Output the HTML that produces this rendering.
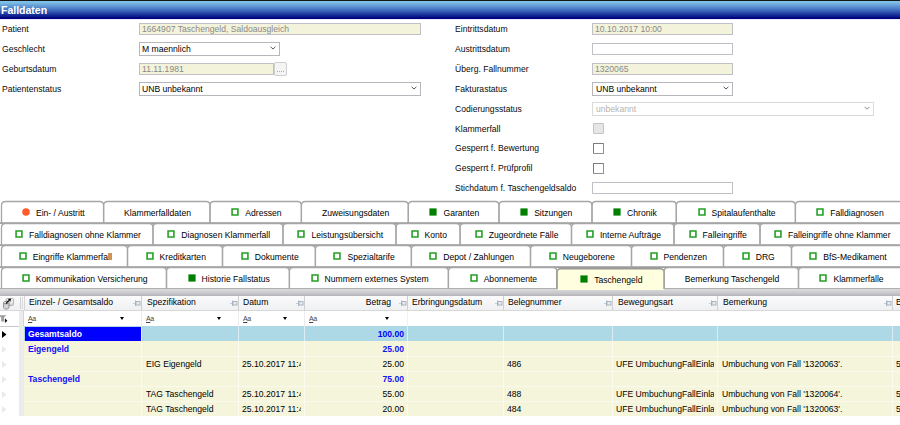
<!DOCTYPE html>
<html><head><meta charset="utf-8"><style>
html,body{margin:0;padding:0}
body{width:900px;height:425px;overflow:hidden;background:#fff;font-family:"Liberation Sans",sans-serif;font-size:8.6px;color:#000;position:relative}
.a{position:absolute;white-space:nowrap}
#hdr{left:0;top:0;width:900px;height:19px;background:linear-gradient(to bottom,#161616 0,#161616 1px,#80c8ea 1px,#7ab8e2 3px,#5a90d0 7px,#3a62b8 11px,#1e3aa0 14px,#0c1a8c 16.5px,#000080 18px,#000080 19px)}
#hdr span{position:absolute;left:1px;top:4px;color:#fff;font-weight:bold;font-size:10.5px}
.lbl{position:absolute;white-space:nowrap;color:#0a0a0a}
.inp{position:absolute;box-sizing:border-box;border:1px solid #c0c0c6;background:#fff}
.ro{background:#f3f3dc;color:#8a8a8a}
.sel{position:absolute;box-sizing:border-box;border:1px solid #b6b6bc;background:#fff}
.cb{position:absolute;box-sizing:border-box;width:10.5px;height:11px;border:1px solid #7c7c7c;border-right-color:#909090;border-bottom-color:#909090;background:#fff;border-radius:1px}
.tab{position:absolute;box-sizing:border-box;height:22px;display:flex;align-items:center;justify-content:center;color:#000;white-space:nowrap;padding-top:1px;padding-left:1.5px}
.ic{display:inline-block;box-sizing:border-box;width:8px;height:8px;margin-right:6px;flex:none;position:relative;top:-0.5px}
.ho{box-shadow:inset 0 0 0 1.7px #22a022;transform:scale(0.93)}
.so{background:#008000;transform:scale(0.9)}
.dot{border-radius:50%;background:#ff5b2b;transform:scale(0.95)}
.gh{color:#000}
.aa{position:absolute;top:315px;font-style:normal;font-size:7px;color:#444;letter-spacing:-0.4px}
.aa u{text-decoration:underline}
.tri{position:absolute;top:317px;width:0;height:0;border-left:2.5px solid transparent;border-right:2.5px solid transparent;border-top:3px solid #000}
.c{color:#000}
.b{font-weight:bold}
.clip{overflow:hidden}
</style></head><body>
<div id="hdr" class="a"><span>Falldaten</span></div>
<div class="a" style="left:0;top:19px;width:900px;height:1px;background:#ececf6"></div>

<!-- left labels -->
<div class="lbl" style="left:2px;top:24px">Patient</div>
<div class="lbl" style="left:2px;top:44px">Geschlecht</div>
<div class="lbl" style="left:2px;top:64px">Geburtsdatum</div>
<div class="lbl" style="left:2px;top:84px">Patientenstatus</div>

<div class="inp ro" style="left:139px;top:23px;width:282px;height:12px"></div>
<div class="a" style="left:142px;top:24px;color:#8a8a8a">1664907 Taschengeld, Saldoausgleich</div>
<div class="sel" style="left:139px;top:42px;width:141px;height:14px"></div>
<div class="a" style="left:142px;top:44px">M maennlich</div>
<svg class="a" style="left:270px;top:46px" width="6" height="4" viewBox="0 0 6 4"><path d="M0.6 0.8L3 3L5.4 0.8" stroke="#5a5a5a" stroke-width="1" fill="none"/></svg>
<div class="inp ro" style="left:139px;top:63px;width:135px;height:12px"></div>
<div class="a" style="left:142px;top:64px;color:#8a8a8a">11.11.1981</div>
<div class="inp" style="left:274px;top:62px;width:13px;height:14px;background:#f4f4f4;border-color:#cfcfcf;border-radius:2px"></div>
<svg class="a" style="left:277px;top:71px" width="8" height="2"><rect x="0" y="0" width="1" height="1" fill="#b0a0a8"/><rect x="2" y="0" width="1" height="1" fill="#a8b0b8"/><rect x="4" y="0" width="1" height="1" fill="#a8b0b8"/><rect x="6" y="0" width="1" height="1" fill="#b0a8c0"/></svg>
<div class="sel" style="left:139px;top:82px;width:282px;height:14px"></div>
<div class="a" style="left:142px;top:84px">UNB unbekannt</div>
<svg class="a" style="left:411px;top:86px" width="6" height="4" viewBox="0 0 6 4"><path d="M0.6 0.8L3 3L5.4 0.8" stroke="#5a5a5a" stroke-width="1" fill="none"/></svg>

<!-- right labels -->
<div class="lbl" style="left:455px;top:24px">Eintrittsdatum</div>
<div class="lbl" style="left:455px;top:44px">Austrittsdatum</div>
<div class="lbl" style="left:455px;top:64px">Überg. Fallnummer</div>
<div class="lbl" style="left:455px;top:84px">Fakturastatus</div>
<div class="lbl" style="left:455px;top:104px">Codierungsstatus</div>
<div class="lbl" style="left:455px;top:124px">Klammerfall</div>
<div class="lbl" style="left:455px;top:143px">Gesperrt f. Bewertung</div>
<div class="lbl" style="left:455px;top:163px">Gesperrt f. Prüfprofil</div>
<div class="lbl" style="left:455px;top:183px">Stichdatum f. Taschengeldsaldo</div>

<div class="inp ro" style="left:592px;top:23px;width:141px;height:12px"></div>
<div class="a" style="left:595px;top:24px;color:#8a8a8a">10.10.2017 10:00</div>
<div class="inp" style="left:592px;top:43px;width:141px;height:12px"></div>
<div class="inp ro" style="left:592px;top:63px;width:141px;height:12px"></div>
<div class="a" style="left:595px;top:64px;color:#8a8a8a">1320065</div>
<div class="sel" style="left:592px;top:82px;width:141px;height:14px"></div>
<div class="a" style="left:596px;top:84px">UNB unbekannt</div>
<svg class="a" style="left:723px;top:86px" width="6" height="4" viewBox="0 0 6 4"><path d="M0.6 0.8L3 3L5.4 0.8" stroke="#5a5a5a" stroke-width="1" fill="none"/></svg>
<div class="sel" style="left:592px;top:102px;width:282px;height:14px;border-color:#dadada"></div>
<div class="a" style="left:596px;top:104px;color:#b4b4b4">unbekannt</div>
<svg class="a" style="left:864px;top:106px" width="6" height="4" viewBox="0 0 6 4"><path d="M0.6 0.8L3 3L5.4 0.8" stroke="#b0b0b0" stroke-width="1.1" fill="none"/></svg>
<div class="cb" style="left:593px;top:123px;background:#e6e6e6;border-color:#c4c4c4"></div>
<div class="cb" style="left:593px;top:143px"></div>
<div class="cb" style="left:593px;top:163px"></div>
<div class="inp" style="left:592px;top:182px;width:141px;height:12px"></div>

<!-- tabs -->
<svg class="a" style="left:0;top:0" width="900" height="300" viewBox="0 0 900 300">
<path d="M556.90 290.00V272.80Q556.90 268.80 560.90 268.80H660.20Q664.20 268.80 664.20 272.80V290.00Z" fill="#ffffe0"/>
<rect x="0" y="222" width="900" height="1" fill="#b4b4b4"/><rect x="0" y="223" width="900" height="1" fill="#9c9c9c"/>
<rect x="0" y="244" width="900" height="1" fill="#b4b4b4"/><rect x="0" y="245" width="900" height="1" fill="#9c9c9c"/>
<rect x="0" y="266" width="900" height="1" fill="#b4b4b4"/><rect x="0" y="267" width="900" height="1" fill="#9c9c9c"/>
<rect x="0" y="288" width="556" height="1" fill="#b0b0b0"/><rect x="665" y="288" width="235" height="1" fill="#b0b0b0"/>
<path d="M1.50 224.00V205.50Q1.50 201.50 5.50 201.50H99.60Q103.60 201.50 103.60 205.50V224.00" fill="none" stroke="#a6a6a6" stroke-width="1.3"/>
<path d="M103.60 224.00V205.50Q103.60 201.50 107.60 201.50H206.00Q210.00 201.50 210.00 205.50V224.00" fill="none" stroke="#a6a6a6" stroke-width="1.3"/>
<path d="M210.00 224.00V205.50Q210.00 201.50 214.00 201.50H297.40Q301.40 201.50 301.40 205.50V224.00" fill="none" stroke="#a6a6a6" stroke-width="1.3"/>
<path d="M301.40 224.00V205.50Q301.40 201.50 305.40 201.50H404.30Q408.30 201.50 408.30 205.50V224.00" fill="none" stroke="#a6a6a6" stroke-width="1.3"/>
<path d="M408.30 224.00V205.50Q408.30 201.50 412.30 201.50H495.00Q499.00 201.50 499.00 205.50V224.00" fill="none" stroke="#a6a6a6" stroke-width="1.3"/>
<path d="M499.00 224.00V205.50Q499.00 201.50 503.00 201.50H588.00Q592.00 201.50 592.00 205.50V224.00" fill="none" stroke="#a6a6a6" stroke-width="1.3"/>
<path d="M592.00 224.00V205.50Q592.00 201.50 596.00 201.50H672.30Q676.30 201.50 676.30 205.50V224.00" fill="none" stroke="#a6a6a6" stroke-width="1.3"/>
<path d="M676.30 224.00V205.50Q676.30 201.50 680.30 201.50H791.40Q795.40 201.50 795.40 205.50V224.00" fill="none" stroke="#a6a6a6" stroke-width="1.3"/>
<path d="M795.40 224.00V205.50Q795.40 201.50 799.40 201.50H899.00Q903.00 201.50 903.00 205.50V224.00" fill="none" stroke="#a6a6a6" stroke-width="1.3"/>
<path d="M1.50 246.00V227.50Q1.50 223.50 5.50 223.50H149.00Q153.00 223.50 153.00 227.50V246.00" fill="none" stroke="#a6a6a6" stroke-width="1.3"/>
<path d="M153.00 246.00V227.50Q153.00 223.50 157.00 223.50H279.00Q283.00 223.50 283.00 227.50V246.00" fill="none" stroke="#a6a6a6" stroke-width="1.3"/>
<path d="M283.00 246.00V227.50Q283.00 223.50 287.00 223.50H392.00Q396.00 223.50 396.00 227.50V246.00" fill="none" stroke="#a6a6a6" stroke-width="1.3"/>
<path d="M396.00 246.00V227.50Q396.00 223.50 400.00 223.50H456.10Q460.10 223.50 460.10 227.50V246.00" fill="none" stroke="#a6a6a6" stroke-width="1.3"/>
<path d="M460.10 246.00V227.50Q460.10 223.50 464.10 223.50H567.50Q571.50 223.50 571.50 227.50V246.00" fill="none" stroke="#a6a6a6" stroke-width="1.3"/>
<path d="M571.50 246.00V227.50Q571.50 223.50 575.50 223.50H670.00Q674.00 223.50 674.00 227.50V246.00" fill="none" stroke="#a6a6a6" stroke-width="1.3"/>
<path d="M674.00 246.00V227.50Q674.00 223.50 678.00 223.50H756.00Q760.00 223.50 760.00 227.50V246.00" fill="none" stroke="#a6a6a6" stroke-width="1.3"/>
<path d="M760.00 246.00V227.50Q760.00 223.50 764.00 223.50H899.00Q903.00 223.50 903.00 227.50V246.00" fill="none" stroke="#a6a6a6" stroke-width="1.3"/>
<path d="M1.50 268.00V249.50Q1.50 245.50 5.50 245.50H123.50Q127.50 245.50 127.50 249.50V268.00" fill="none" stroke="#a6a6a6" stroke-width="1.3"/>
<path d="M127.50 268.00V249.50Q127.50 245.50 131.50 245.50H218.50Q222.50 245.50 222.50 249.50V268.00" fill="none" stroke="#a6a6a6" stroke-width="1.3"/>
<path d="M222.50 268.00V249.50Q222.50 245.50 226.50 245.50H311.40Q315.40 245.50 315.40 249.50V268.00" fill="none" stroke="#a6a6a6" stroke-width="1.3"/>
<path d="M315.40 268.00V249.50Q315.40 245.50 319.40 245.50H407.40Q411.40 245.50 411.40 249.50V268.00" fill="none" stroke="#a6a6a6" stroke-width="1.3"/>
<path d="M411.40 268.00V249.50Q411.40 245.50 415.40 245.50H526.50Q530.50 245.50 530.50 249.50V268.00" fill="none" stroke="#a6a6a6" stroke-width="1.3"/>
<path d="M530.50 268.00V249.50Q530.50 245.50 534.50 245.50H627.50Q631.50 245.50 631.50 249.50V268.00" fill="none" stroke="#a6a6a6" stroke-width="1.3"/>
<path d="M631.50 268.00V249.50Q631.50 245.50 635.50 245.50H719.50Q723.50 245.50 723.50 249.50V268.00" fill="none" stroke="#a6a6a6" stroke-width="1.3"/>
<path d="M723.50 268.00V249.50Q723.50 245.50 727.50 245.50H787.50Q791.50 245.50 791.50 249.50V268.00" fill="none" stroke="#a6a6a6" stroke-width="1.3"/>
<path d="M791.50 268.00V249.50Q791.50 245.50 795.50 245.50H899.00Q903.00 245.50 903.00 249.50V268.00" fill="none" stroke="#a6a6a6" stroke-width="1.3"/>
<path d="M1.50 289.50V271.50Q1.50 267.50 5.50 267.50H162.50Q166.50 267.50 166.50 271.50V289.50" fill="none" stroke="#a6a6a6" stroke-width="1.3"/>
<path d="M166.50 289.50V271.50Q166.50 267.50 170.50 267.50H285.40Q289.40 267.50 289.40 271.50V289.50" fill="none" stroke="#a6a6a6" stroke-width="1.3"/>
<path d="M289.40 289.50V271.50Q289.40 267.50 293.40 267.50H444.40Q448.40 267.50 448.40 271.50V289.50" fill="none" stroke="#a6a6a6" stroke-width="1.3"/>
<path d="M448.40 289.50V271.50Q448.40 267.50 452.40 267.50H552.90Q556.90 267.50 556.90 271.50V289.50" fill="none" stroke="#a6a6a6" stroke-width="1.3"/>
<path d="M556.90 290.00V272.80Q556.90 268.80 560.90 268.80H660.20Q664.20 268.80 664.20 272.80V290.00" fill="none" stroke="#9a9a9a" stroke-width="1.5"/>
<path d="M664.20 289.50V271.50Q664.20 267.50 668.20 267.50H794.50Q798.50 267.50 798.50 271.50V289.50" fill="none" stroke="#a6a6a6" stroke-width="1.3"/>
<path d="M798.50 289.50V271.50Q798.50 267.50 802.50 267.50H899.00Q903.00 267.50 903.00 271.50V289.50" fill="none" stroke="#a6a6a6" stroke-width="1.3"/>
</svg>
<div class="tab" style="left:1.5px;top:201px;width:102.1px"><i class="ic dot"></i>Ein- / Austritt</div>
<div class="tab" style="left:103.6px;top:201px;width:106.4px">Klammerfalldaten</div>
<div class="tab" style="left:210.0px;top:201px;width:91.4px"><i class="ic ho"></i>Adressen</div>
<div class="tab" style="left:301.4px;top:201px;width:106.9px">Zuweisungsdaten</div>
<div class="tab" style="left:408.3px;top:201px;width:90.7px"><i class="ic so"></i>Garanten</div>
<div class="tab" style="left:499.0px;top:201px;width:93.0px"><i class="ic so"></i>Sitzungen</div>
<div class="tab" style="left:592.0px;top:201px;width:84.3px"><i class="ic so"></i>Chronik</div>
<div class="tab" style="left:676.3px;top:201px;width:119.1px"><i class="ic ho"></i>Spitalaufenthalte</div>
<div class="tab" style="left:795.4px;top:201px;width:107.6px"><i class="ic ho"></i>Falldiagnosen</div>
<div class="tab" style="left:1.5px;top:223px;width:151.5px"><i class="ic ho"></i>Falldiagnosen ohne Klammer</div>
<div class="tab" style="left:153.0px;top:223px;width:130.0px"><i class="ic ho"></i>Diagnosen Klammerfall</div>
<div class="tab" style="left:283.0px;top:223px;width:113.0px"><i class="ic ho"></i>Leistungsübersicht</div>
<div class="tab" style="left:396.0px;top:223px;width:64.1px"><i class="ic ho"></i>Konto</div>
<div class="tab" style="left:460.1px;top:223px;width:111.4px"><i class="ic ho"></i>Zugeordnete Fälle</div>
<div class="tab" style="left:571.5px;top:223px;width:102.5px"><i class="ic ho"></i>Interne Aufträge</div>
<div class="tab" style="left:674.0px;top:223px;width:86.0px"><i class="ic ho"></i>Falleingriffe</div>
<div class="tab" style="left:760.0px;top:223px;width:143.0px"><i class="ic ho"></i>Falleingriffe ohne Klammer</div>
<div class="tab" style="left:1.5px;top:245px;width:126.0px"><i class="ic ho"></i>Eingriffe Klammerfall</div>
<div class="tab" style="left:127.5px;top:245px;width:95.0px"><i class="ic ho"></i>Kreditkarten</div>
<div class="tab" style="left:222.5px;top:245px;width:92.9px"><i class="ic ho"></i>Dokumente</div>
<div class="tab" style="left:315.4px;top:245px;width:96.0px"><i class="ic ho"></i>Spezialtarife</div>
<div class="tab" style="left:411.4px;top:245px;width:119.1px"><i class="ic ho"></i>Depot / Zahlungen</div>
<div class="tab" style="left:530.5px;top:245px;width:101.0px"><i class="ic ho"></i>Neugeborene</div>
<div class="tab" style="left:631.5px;top:245px;width:92.0px"><i class="ic ho"></i>Pendenzen</div>
<div class="tab" style="left:723.5px;top:245px;width:68.0px"><i class="ic ho"></i>DRG</div>
<div class="tab" style="left:791.5px;top:245px;width:111.5px"><i class="ic ho"></i>BfS-Medikament</div>
<div class="tab" style="left:1.5px;top:267px;width:165.0px"><i class="ic ho"></i>Kommunikation Versicherung</div>
<div class="tab" style="left:166.5px;top:267px;width:122.9px"><i class="ic so"></i>Historie Fallstatus</div>
<div class="tab" style="left:289.4px;top:267px;width:159.0px"><i class="ic ho"></i>Nummern externes System</div>
<div class="tab" style="left:448.4px;top:267px;width:108.5px"><i class="ic ho"></i>Abonnemente</div>
<div class="tab" style="left:556.9px;top:268px;width:107.3px"><i class="ic so"></i>Taschengeld</div>
<div class="tab" style="left:664.2px;top:267px;width:134.3px">Bemerkung Taschengeld</div>
<div class="tab" style="left:798.5px;top:267px;width:104.5px"><i class="ic ho"></i>Klammerfälle</div>
<!-- grid -->
<div class="a" style="left:0;top:289px;width:900px;height:7px;background:linear-gradient(#dcdcde,#c8c8cc 60%,#b4b4b8)"></div>
<div class="a" style="left:558px;top:289px;width:106px;height:1px;background:#ffffe0"></div>

<!-- grid header -->
<div class="a" style="left:0;top:296px;width:900px;height:14px;background:linear-gradient(#fbfbfc,#eff0f2)"></div>
<div class="a" style="left:0;top:310px;width:900px;height:1px;background:#d8d8d8"></div>
<!-- header icon -->
<svg class="a" style="left:0;top:296px" width="16" height="14" viewBox="0 0 16 14">
<rect x="6.2" y="2.5" width="7.3" height="7" rx="1" fill="#ececec" stroke="#b4b4b4"/>
<line x1="9" y1="8.2" x2="13" y2="8.2" stroke="#c4c4c4"/>
<path d="M3.6 6.6v5c0 .9 1.2 1.4 2.7 1.4s2.7-.5 2.7-1.4v-5" fill="#d6d6d6" stroke="#8e8e8e"/>
<ellipse cx="6.3" cy="6.6" rx="2.7" ry="1.3" fill="#eeeeee" stroke="#8e8e8e"/>
<path d="M6.2 7.6Q7.2 5.6 8.9 4.6" stroke="#111" stroke-width="1.4" fill="none"/>
<path d="M7.9 2.9L11.2 2.6L10.2 5.9z" fill="#111"/>
</svg>
<div class="a" style="left:20px;top:297px;width:1px;height:12px;background:#cfcfcf"></div>
<div class="a" style="left:22px;top:297px;width:1px;height:12px;background:#dcdcdc"></div>
<!-- header separators -->
<div class="a" style="left:24px;top:296px;width:1px;height:14px;background:#d6d6d6"></div>
<div class="a" style="left:141px;top:296px;width:1px;height:14px;background:#cfcfcf"></div>
<div class="a" style="left:238px;top:296px;width:1px;height:14px;background:#cfcfcf"></div>
<div class="a" style="left:304px;top:296px;width:1px;height:14px;background:#cfcfcf"></div>
<div class="a" style="left:407px;top:296px;width:1px;height:14px;background:#cfcfcf"></div>
<div class="a" style="left:503px;top:296px;width:1px;height:14px;background:#cfcfcf"></div>
<div class="a" style="left:612px;top:296px;width:1px;height:14px;background:#cfcfcf"></div>
<div class="a" style="left:717px;top:296px;width:1px;height:14px;background:#cfcfcf"></div>
<div class="a" style="left:892px;top:296px;width:1px;height:14px;background:#cfcfcf"></div>
<!-- header texts -->
<div class="a gh" style="left:29px;top:297px">Einzel- / Gesamtsaldo</div>
<div class="a gh" style="left:147px;top:297px">Spezifikation</div>
<div class="a gh" style="left:243px;top:297px">Datum</div>
<div class="a gh" style="left:308px;top:297px;width:83px;text-align:right">Betrag</div>
<div class="a gh" style="left:412px;top:297px">Erbringungsdatum</div>
<div class="a gh" style="left:508px;top:297px">Belegnummer</div>
<div class="a gh" style="left:618px;top:297px">Bewegungsart</div>
<div class="a gh" style="left:723px;top:297px">Bemerkung</div>
<div class="a gh" style="left:896px;top:297px">B</div>
<!-- pins -->
<svg class="a" style="left:133px;top:300px" width="8" height="7" viewBox="0 0 8 7"><path d="M0 3.5h2" stroke="#c4ccd6"/><path d="M2.5 0.5v5.5" stroke="#aab4c2"/><rect x="3" y="1.5" width="4" height="3.5" fill="#e8ecf0" stroke="#aab4c2"/></svg><svg class="a" style="left:230px;top:300px" width="8" height="7" viewBox="0 0 8 7"><path d="M0 3.5h2" stroke="#c4ccd6"/><path d="M2.5 0.5v5.5" stroke="#aab4c2"/><rect x="3" y="1.5" width="4" height="3.5" fill="#e8ecf0" stroke="#aab4c2"/></svg><svg class="a" style="left:296px;top:300px" width="8" height="7" viewBox="0 0 8 7"><path d="M0 3.5h2" stroke="#c4ccd6"/><path d="M2.5 0.5v5.5" stroke="#aab4c2"/><rect x="3" y="1.5" width="4" height="3.5" fill="#e8ecf0" stroke="#aab4c2"/></svg><svg class="a" style="left:399px;top:300px" width="8" height="7" viewBox="0 0 8 7"><path d="M0 3.5h2" stroke="#c4ccd6"/><path d="M2.5 0.5v5.5" stroke="#aab4c2"/><rect x="3" y="1.5" width="4" height="3.5" fill="#e8ecf0" stroke="#aab4c2"/></svg>
<svg class="a" style="left:495px;top:300px" width="8" height="7" viewBox="0 0 8 7"><path d="M0 3.5h2" stroke="#c4ccd6"/><path d="M2.5 0.5v5.5" stroke="#aab4c2"/><rect x="3" y="1.5" width="4" height="3.5" fill="#e8ecf0" stroke="#aab4c2"/></svg><svg class="a" style="left:604px;top:300px" width="8" height="7" viewBox="0 0 8 7"><path d="M0 3.5h2" stroke="#c4ccd6"/><path d="M2.5 0.5v5.5" stroke="#aab4c2"/><rect x="3" y="1.5" width="4" height="3.5" fill="#e8ecf0" stroke="#aab4c2"/></svg><svg class="a" style="left:709px;top:300px" width="8" height="7" viewBox="0 0 8 7"><path d="M0 3.5h2" stroke="#c4ccd6"/><path d="M2.5 0.5v5.5" stroke="#aab4c2"/><rect x="3" y="1.5" width="4" height="3.5" fill="#e8ecf0" stroke="#aab4c2"/></svg><svg class="a" style="left:884px;top:300px" width="8" height="7" viewBox="0 0 8 7"><path d="M0 3.5h2" stroke="#c4ccd6"/><path d="M2.5 0.5v5.5" stroke="#aab4c2"/><rect x="3" y="1.5" width="4" height="3.5" fill="#e8ecf0" stroke="#aab4c2"/></svg>

<!-- filter row -->
<div class="a" style="left:0;top:311px;width:19px;height:15px;background:#fff"></div>
<div class="a" style="left:19px;top:311px;width:5px;height:105px;background:#ebebeb"></div>
<div class="a" style="left:23px;top:311px;width:1px;height:15px;background:#d4d4d4"></div>
<div class="a" style="left:0;top:326px;width:19px;height:1px;background:#c8c8c8"></div>
<svg class="a" style="left:0;top:315px" width="9" height="9" viewBox="0 0 9 9"><path d="M0 0.2h6.3L3.9 2.5V6.5H1.3V2.5L0 1.4z" fill="#9a9a9a"/><path d="M4.9 3.3L7.4 5.7L4.9 8.1z" fill="#111"/></svg>
<div class="a" style="left:141px;top:311px;width:1px;height:15px;background:#ececec"></div>
<div class="a" style="left:238px;top:311px;width:1px;height:15px;background:#ececec"></div>
<div class="a" style="left:304px;top:311px;width:1px;height:15px;background:#ececec"></div>
<div class="a" style="left:407px;top:311px;width:1px;height:15px;background:#f2f2f2"></div>
<i class="aa" style="left:28px"><u>A</u>a</i><i class="tri" style="left:120px"></i>
<i class="aa" style="left:146px"><u>A</u>a</i><i class="tri" style="left:217px"></i>
<i class="aa" style="left:243px"><u>A</u>a</i><i class="tri" style="left:283px"></i>
<i class="aa" style="left:309px"><u>A</u>a</i><i class="tri" style="left:385px"></i>

<!-- data rows -->
<div class="a" style="left:24px;top:326px;width:876px;height:15px;background:#add8e6"></div>
<div class="a" style="left:24px;top:341px;width:876px;height:75px;background:#f5f5dc"></div>
<div class="a" style="left:24px;top:356px;width:876px;height:1px;background:#f9f9ec"></div>
<div class="a" style="left:24px;top:371px;width:876px;height:1px;background:#f9f9ec"></div>
<div class="a" style="left:24px;top:386px;width:876px;height:1px;background:#f9f9ec"></div>
<div class="a" style="left:24px;top:401px;width:876px;height:1px;background:#f9f9ec"></div>
<div class="a" style="left:141px;top:326px;width:1px;height:90px;background:rgba(255,255,255,0.55)"></div>
<div class="a" style="left:238px;top:326px;width:1px;height:90px;background:rgba(255,255,255,0.55)"></div>
<div class="a" style="left:304px;top:326px;width:1px;height:90px;background:rgba(255,255,255,0.55)"></div>
<div class="a" style="left:407px;top:326px;width:1px;height:90px;background:rgba(255,255,255,0.55)"></div>
<div class="a" style="left:503px;top:326px;width:1px;height:90px;background:rgba(255,255,255,0.55)"></div>
<div class="a" style="left:612px;top:326px;width:1px;height:90px;background:rgba(255,255,255,0.55)"></div>
<div class="a" style="left:717px;top:326px;width:1px;height:90px;background:rgba(255,255,255,0.55)"></div>
<div class="a" style="left:892px;top:326px;width:1px;height:90px;background:rgba(255,255,255,0.55)"></div>
<div class="a" style="left:25px;top:327px;width:116px;height:14px;background:#0000ff"></div>
<!-- row arrows -->
<svg class="a" style="left:2px;top:331px" width="5" height="7" viewBox="0 0 5 7"><path d="M0 0l4.5 3.5L0 7z" fill="#000"/></svg>
<svg class="a" style="left:2px;top:346px" width="5" height="7" viewBox="0 0 5 7"><path d="M0 0l4.5 3.5L0 7z" fill="#eaeaea"/></svg>
<svg class="a" style="left:2px;top:361px" width="5" height="7" viewBox="0 0 5 7"><path d="M0 0l4.5 3.5L0 7z" fill="#eaeaea"/></svg>
<svg class="a" style="left:2px;top:376px" width="5" height="7" viewBox="0 0 5 7"><path d="M0 0l4.5 3.5L0 7z" fill="#eaeaea"/></svg>
<svg class="a" style="left:2px;top:391px" width="5" height="7" viewBox="0 0 5 7"><path d="M0 0l4.5 3.5L0 7z" fill="#eaeaea"/></svg>
<svg class="a" style="left:2px;top:406px" width="5" height="7" viewBox="0 0 5 7"><path d="M0 0l4.5 3.5L0 7z" fill="#eaeaea"/></svg>

<div class="a c b" style="left:28px;top:329px;color:#fff">Gesamtsaldo</div>
<div class="a c b" style="left:308px;top:329px;width:96px;text-align:right;color:#0000ff">100.00</div>
<div class="a c b" style="left:28px;top:344px;color:#1010f8">Eigengeld</div>
<div class="a c b" style="left:308px;top:344px;width:96px;text-align:right;color:#1010f8">25.00</div>
<div class="a c" style="left:146px;top:359px">EIG Eigengeld</div>
<div class="a c clip" style="left:242px;top:359px;width:59px">25.10.2017 11:46</div>
<div class="a c" style="left:308px;top:359px;width:96px;text-align:right">25.00</div>
<div class="a c" style="left:507px;top:359px">486</div>
<div class="a c clip" style="left:616px;top:359px;width:98px">UFE UmbuchungFallEinlage</div>
<div class="a c" style="left:722px;top:359px">Umbuchung von Fall '1320063'.</div>
<div class="a c" style="left:896px;top:359px">5</div>
<div class="a c b" style="left:28px;top:374px;color:#1010f8">Taschengeld</div>
<div class="a c b" style="left:308px;top:374px;width:96px;text-align:right;color:#1010f8">75.00</div>
<div class="a c" style="left:146px;top:389px">TAG Taschengeld</div>
<div class="a c clip" style="left:242px;top:389px;width:59px">25.10.2017 11:46</div>
<div class="a c" style="left:308px;top:389px;width:96px;text-align:right">55.00</div>
<div class="a c" style="left:507px;top:389px">488</div>
<div class="a c clip" style="left:616px;top:389px;width:98px">UFE UmbuchungFallEinlage</div>
<div class="a c" style="left:722px;top:389px">Umbuchung von Fall '1320064'.</div>
<div class="a c" style="left:896px;top:389px">5</div>
<div class="a c" style="left:146px;top:404px">TAG Taschengeld</div>
<div class="a c clip" style="left:242px;top:404px;width:59px">25.10.2017 11:46</div>
<div class="a c" style="left:308px;top:404px;width:96px;text-align:right">20.00</div>
<div class="a c" style="left:507px;top:404px">484</div>
<div class="a c clip" style="left:616px;top:404px;width:98px">UFE UmbuchungFallEinlage</div>
<div class="a c" style="left:722px;top:404px">Umbuchung von Fall '1320063'.</div>
<div class="a c" style="left:896px;top:404px">5</div>
</body></html>
